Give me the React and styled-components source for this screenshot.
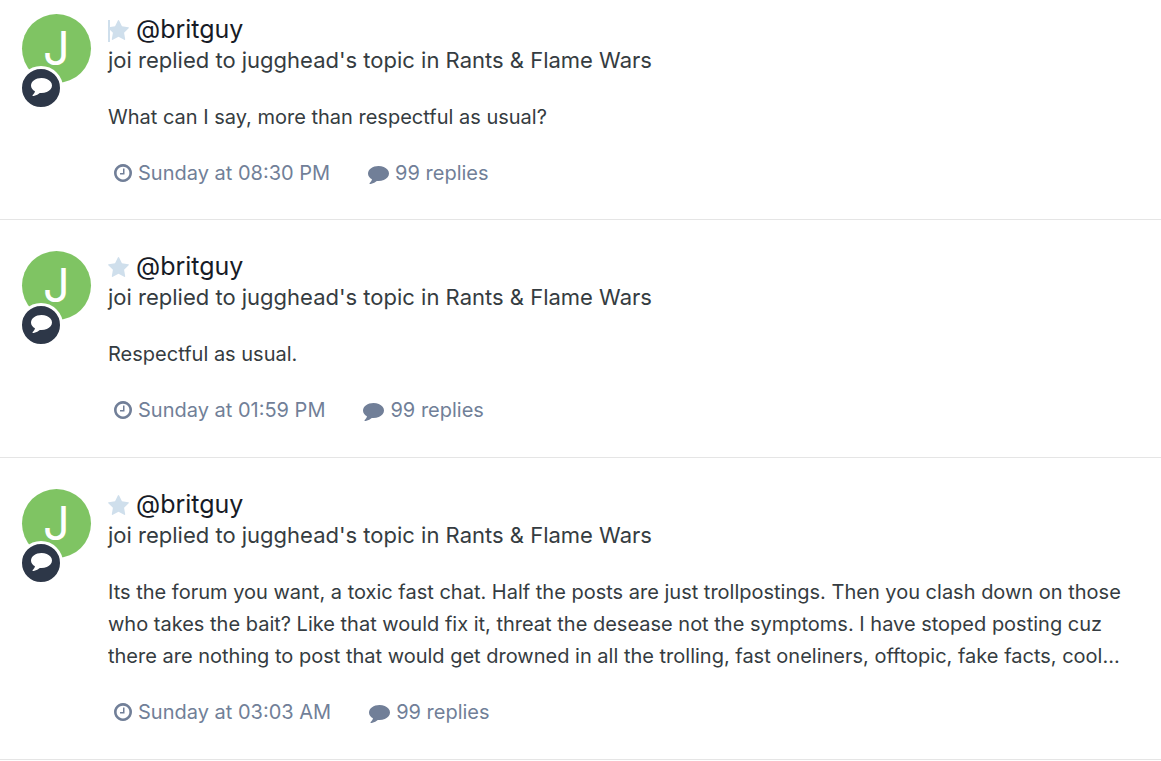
import React from "react";
import styled, { createGlobalStyle } from "styled-components";

const GlobalStyle = createGlobalStyle`
  *, *::before, *::after { box-sizing: border-box; }
  body {
    margin: 0;
    background: #fff;
    color: #353c41;
    font-family: Inter, "Liberation Sans", sans-serif;
    font-size: 20px;
  }
  a { color: inherit; text-decoration: none; }
`;

const Stream = styled.ol`
  list-style: none;
  margin: 0;
  padding: 0;
`;

const Item = styled.li`
  display: flex;
  gap: 17px;
  padding: 31px 22px;
  border-bottom: 1px solid #e5e5e5;

  &:first-child {
    padding-top: 14px;
    padding-bottom: 30px;
  }
`;

const Author = styled.div`
  position: relative;
  flex: none;
  width: 69px;
`;

const Avatar = styled.a`
  display: flex;
  align-items: center;
  justify-content: center;
  height: 69px;
  padding-bottom: 2px;
  border-radius: 50%;
  background: #7fc463;
  && { color: #fff; }
  font-size: 47px;
`;

const TypeBadge = styled.span`
  position: absolute;
  top: 52px;
  left: -3px;
  display: flex;
  align-items: center;
  justify-content: center;
  width: 44px;
  height: 44px;
  padding-bottom: 6px;
  border: 3px solid #fff;
  border-radius: 50%;
  background: #2d3748;
  color: #fff;
`;

const Body = styled.div`
  flex: 1;
  min-width: 0;
`;

const Title = styled.h2`
  display: flex;
  align-items: center;
  gap: 7px;
  margin: 0;
  color: #171b26;
  font-size: 25px;
  font-weight: 400;
  line-height: 30px;
`;

const Star = styled.span`
  position: relative;
  display: flex;
  padding-top: 2px;
  color: #cfdfec;

  &::before {
    content: "";
    display: ${({ $caret }) => ($caret ? "block" : "none")};
    position: absolute;
    top: 2px;
    left: 0;
    width: 2px;
    height: 22px;
    background: currentColor;
  }
`;

const Summary = styled.p`
  margin: 0;
  font-size: 22px;
  line-height: 32px;
`;

const Snippet = styled.p`
  margin: 25px 0 24px;
  line-height: 32px;
  display: -webkit-box;
  -webkit-box-orient: vertical;
  -webkit-line-clamp: 3;
  overflow: hidden;
`;

const Meta = styled.div`
  display: flex;
  gap: 38px;
  padding-left: 6px;
  color: #717f98;
  line-height: 32px;
`;

const MetaLink = styled.a`
  display: flex;
  align-items: center;
  gap: 6px;
`;

const StarIcon = () => (
  <svg width="21" height="20" viewBox="64 32 1664 1587" fill="currentColor" aria-hidden="true">
    <path d="M1728 647q0 22-26 48l-363 354 86 500q1 7 1 20 0 21-10.5 35.5t-30.500 14.500q-19 0-40-12l-449-236-449 236q-22 12-40 12-21 0-31.500-14.500t-10.500-35.500q0-6 2-20l86-500-364-354q-25-27-25-48 0-37 56-46l502-73 225-455q19-41 49-41t49 41l225 455 502 73q56 9 56 46z" />
  </svg>
);

const ClockIcon = () => (
  <svg width="18" height="18" viewBox="128 128 1536 1536" fill="currentColor" aria-hidden="true">
    <path d="M1024 544v448q0 14-9 23t-23 9h-320q-14 0-23-9t-9-23v-64q0-14 9-23t23-9h224v-352q0-14 9-23t23-9h64q14 0 23 9t9 23zm416 352q0-148-73-273t-198-198-273-73-273 73-198 198-73 273 73 273 198 198 273 73 273-73 198-198 73-273zm224 0q0 209-103 385.500t-279.500 279.500-385.500 103-385.500-103-279.500-279.500-103-385.500 103-385.500 279.500-279.500 385.500-103 385.500 103 279.500 279.500 103 385.500z" />
  </svg>
);

const BubbleIcon = ({ size }) => (
  <svg width={size} height={size} viewBox="0 0 1792 1792" fill="currentColor" aria-hidden="true">
    <path d="M1792 896q0 174-120 321.500t-326 233-450 85.500q-70 0-145-8-198 175-460 242-49 14-114 22-17 2-30.500-9t-17.500-29v-1q-3-4-.5-12t2-10 4.500-9.500l6-9 7-8.500 8-9q7-8 31-34.500t34.500-38 31-39.500 32.500-51 27-59 26-76q-157-89-247.500-220t-90.500-281q0-130 71-248.500t191-204.500 286-136.500 348-50.500q244 0 450 85.500t326 233 120 321.500z" />
  </svg>
);

const posts = [
  { text: "What can I say, more than respectful as usual?", time: "Sunday at 08:30 PM", caret: true },
  { text: "Respectful as usual.", time: "Sunday at 01:59 PM" },
  {
    text: "Its the forum you want, a toxic fast chat. Half the posts are just trollpostings. Then you clash down on those who takes the bait? Like that would fix it, threat the desease not the symptoms. I have stoped posting cuz there are nothing to post that would get drowned in all the trolling, fast oneliners, offtopic, fake facts, cool...",
    time: "Sunday at 03:03 AM",
  },
];

const Post = ({ text, time, caret }) => (
  <Item>
    <Author>
      <Avatar href="#joi" aria-label="joi">J</Avatar>
      <TypeBadge><BubbleIcon size={21} /></TypeBadge>
    </Author>
    <Body>
      <Title>
        <Star $caret={caret}><StarIcon /></Star>
        <a href="#topic">@britguy</a>
      </Title>
      <Summary>
        <a href="#joi">joi</a> replied to <a href="#jugghead">jugghead's</a> topic in <a href="#forum">Rants &amp; Flame Wars</a>
      </Summary>
      <Snippet>{text}</Snippet>
      <Meta>
        <MetaLink href="#post"><ClockIcon />{time}</MetaLink>
        <MetaLink href="#replies"><BubbleIcon size={21} />99 replies</MetaLink>
      </Meta>
    </Body>
  </Item>
);

export default function App() {
  return (
    <>
      <GlobalStyle />
      <Stream>
        {posts.map((post) => <Post key={post.time} {...post} />)}
      </Stream>
    </>
  );
}
